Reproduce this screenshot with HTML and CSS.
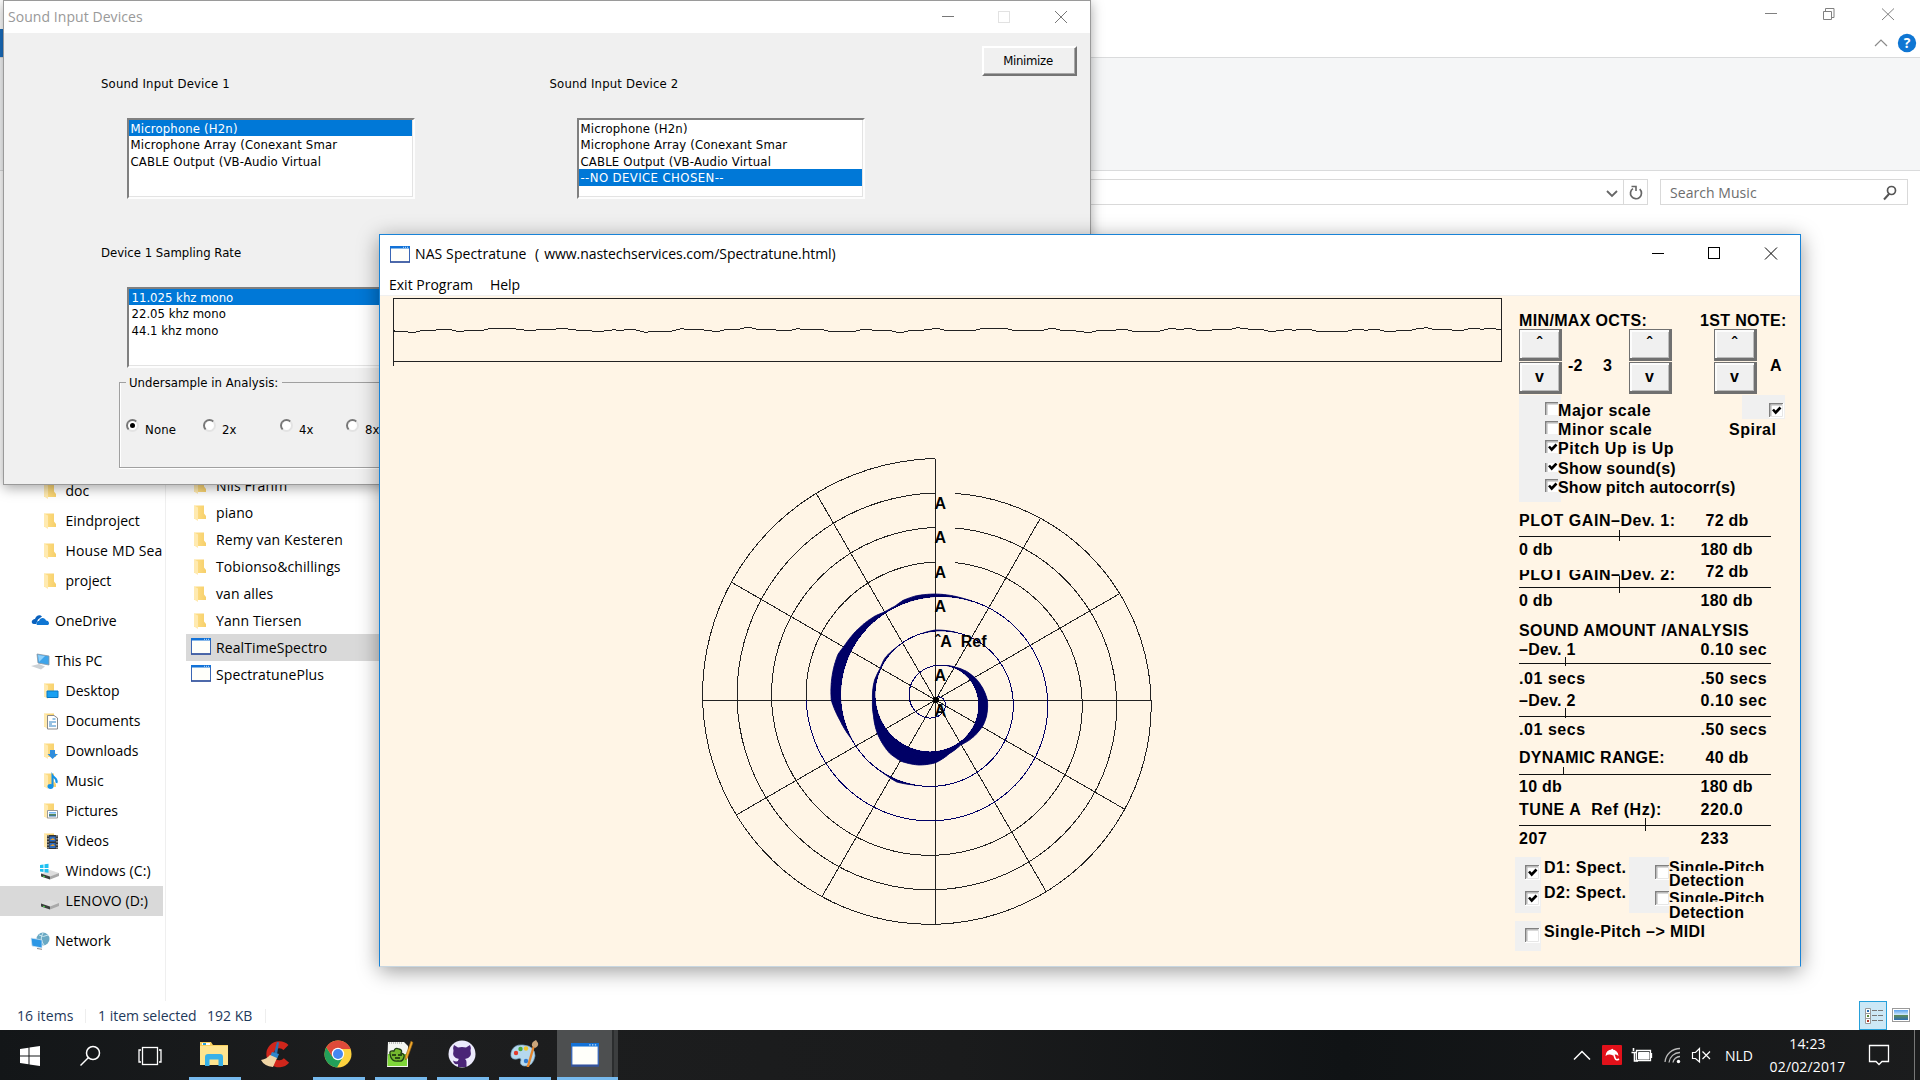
FILE: index.html
```html
<!DOCTYPE html>
<html lang="en">
<head>
<meta charset="utf-8">
<title>NAS Spectratune</title>
<link rel="stylesheet" href="styles.css">
</head>
<body>
<svg width="0" height="0" class="defs">
  <defs>
    <linearGradient id="gFold" x1="0" x2="1"><stop offset="0" stop-color="#ffe08a"/><stop offset="1" stop-color="#f6cf6a"/></linearGradient>
    <linearGradient id="gSky" x1="0" y1="0" x2="0" y2="1"><stop offset="0" stop-color="#5aa3ee"/><stop offset=".5" stop-color="#d5ecfb"/><stop offset=".55" stop-color="#5c8a5a"/><stop offset="1" stop-color="#2b6db5"/></linearGradient>
    <symbol id="folder" viewBox="0 0 19 18"><path d="M3 1.500H13V9.500L15 12V15H3Z" fill="url(#gFold)"/><path d="M3 1.500L7 3.500V17L3 14.500Z" fill="#ffeab0"/></symbol>
    <symbol id="win" viewBox="0 0 20 17" preserveAspectRatio="none"><rect x=".5" y=".5" width="19" height="15.500" fill="#fffffa" stroke="#3a66b4"/><rect width="20" height="2.500" fill="#1272d8"/><path d="M13 1.300h1m1 0h1m1 0h1" stroke="#bfe0ff"/><path d="M0 16H20" stroke="#33519b" stroke-width="1.500"/></symbol>
    <symbol id="drive" viewBox="0 0 19 18"><path d="M1 11.500L10 8l9 3-9 4z" fill="#dedede"/><path d="M1 11.500L10 14.500V17.500L1 14.500Z" fill="#3b3f3d"/><path d="M10 14.500l9-3.500v3L10 17.500z" fill="#a9a9a9"/><path d="M3 14.300l2 .6" stroke="#4be04b"/></symbol>
    <symbol id="check" viewBox="0 0 15 15"><path d="M0 0H15V15H0Z" fill="#fff"/><path d="M.75 14V.75H14" fill="none" stroke="#808080" stroke-width="1.500"/><path d="M2 13V2H13" fill="none" stroke="#b4b4b4"/><path d="M13.500 1V13.500H1" fill="none" stroke="#e6e6e6"/></symbol>
    <symbol id="checked" viewBox="0 0 15 15"><use href="#check"/><path d="M4 6.500L6.700 9.500L11.500 4.500" fill="none" stroke="#000" stroke-width="2.600"/></symbol>
  </defs>
</svg>

<main class="desktop">
  <section class="explorer">
    <div class="ex-title">
      <i class="tab-tint"></i>
      <svg class="ex-caption" width="140" height="28" fill="none" stroke="#808080"><path d="M5 13.500H17"/><path d="M63.500 11.500h8v8h-8zM65.500 11V8.500h8.500v9H72"/><path d="M122 8.500L134 20M134 8.500L122 20"/></svg>
    </div>
    <div class="ex-tabs">
      <i class="file-tab"></i>
      <svg width="46" height="24" fill="none"><path d="M1 17L7 11L13 17" stroke="#8a8a8a" stroke-width="1.200"/><circle cx="33" cy="14" r="9.200" fill="#0f76d3"/><text x="33" y="19" class="help-q">?</text></svg>
    </div>
    <div class="ribbon"></div>
    <div class="ex-address">
      <div class="path-box"><svg width="44" height="24" fill="none" stroke="#666"><path d="M4 11L9 16L14 11" stroke-width="1.800"/><path d="M20.500 0V24" stroke="#d9d9d9"/><path d="M36.700 9.200A5.500 5.500 0 1 1 30 8.600" stroke-width="1.700"/><path d="M28.500 6.500H33V11" stroke-width="1.600"/></svg></div>
      <div class="search-box"><span>Search Music</span><svg width="16" height="16" fill="none" stroke="#555"><circle cx="9.500" cy="5.500" r="4" stroke-width="1.700"/><path d="M7 9L2 14.500" stroke-width="2"/></svg></div>
    </div>
    <div class="ex-main">
      <nav class="tree">
        <div class="t2"><svg><use href="#folder"/></svg>doc</div>
        <div class="t2"><svg><use href="#folder"/></svg>Eindproject</div>
        <div class="t2"><svg><use href="#folder"/></svg><span class="loose">House MD Sea</span></div>
        <div class="t2"><svg><use href="#folder"/></svg>project</div>
        <div class="t1 gap"><svg><path d="M1 11C0 8 3 7 4 7C5 3 9 2 11 4.500L7 7.500L5 12H3Q1.500 12 1 11Z" fill="#0a61bd"/><path d="M6 13C4.500 11 6 9 8 9C9 5 14 5 15 8.500C18 8.500 19 12 17 13Z" fill="#0f76d3"/></svg>OneDrive</div>
        <div class="t1 gap"><svg><path d="M6 2L18 4V13L7 11Z" fill="#3ea4ea" stroke="#8b97a2" stroke-width=".8"/><path d="M7 3L14 4L8 10Z" fill="#8fd0fa"/><path d="M0 14L8 12L14 14.500L10 17.500Z" fill="#cdd2d6"/></svg>This PC</div>
        <div class="t2"><svg><use href="#folder"/><path d="M6 9H17V15.500H6Z" fill="#19a0f2" stroke="#0b78c4"/></svg>Desktop</div>
        <div class="t2"><svg><use href="#folder"/><path d="M6.500 3.500H13L16.500 6V17H6.500Z" fill="#fff" stroke="#8a8a8a"/><path d="M8 10h7M8 12h3M8 14h7M11.500 7h3" stroke="#2e83c6"/></svg>Documents</div>
        <div class="t2"><svg><use href="#folder"/><path d="M9 8H14V12H17L11.500 17L6.500 12H9Z" fill="#2f8ddd"/></svg>Downloads</div>
        <div class="t2"><svg><use href="#folder"/><path d="M11.500 14V3.500C13 6 17 7 15.500 11" fill="none" stroke="#1693e8" stroke-width="2"/><ellipse cx="9.500" cy="14.500" rx="3" ry="2.400" fill="#1693e8"/></svg>Music</div>
        <div class="t2"><svg><use href="#folder"/><path d="M6.500 8.500H16.500V16H6.500Z" fill="#fff" stroke="#999"/><path d="M8 10H15V14.500H8Z" fill="url(#gSky)"/></svg>Pictures</div>
        <div class="t2"><svg><use href="#folder"/><path d="M6 3H17V17H6Z" fill="#333"/><path d="M8.500 4.500h6v5h-6zM8.500 11h6v5h-6z" fill="#2d6cc0"/><path d="M9 8l3-2 2 2zM9 14l3-2 2 2z" fill="#e59a2d"/><path d="M7 3V17M16 3V17" stroke="#ddd" stroke-dasharray="1.500"/></svg>Videos</div>
        <div class="t2 drv"><svg><use href="#drive"/><path d="M0 3L3.500 2.500V6H0ZM4.500 2.300L8.500 1.700V6H4.500ZM0 7H3.500V10L0 9.500ZM4.500 7H8.500V10.700L4.500 10.200Z" fill="#1fc1f1"/></svg>Windows (C:)</div>
        <div class="t2 drv sel"><svg><use href="#drive"/></svg>LENOVO (D:)</div>
        <div class="t1 gap"><svg><circle cx="12" cy="7" r="6.500" fill="#6aa9c4"/><path d="M8 3Q12 6 17 3M12 1Q8 7 13 13" stroke="#c9e6ee" fill="none"/><path d="M0 6L11 8V16L1 14Z" fill="#2d97e5" stroke="#dbe8f2" stroke-width=".7"/><path d="M6 16.500l5 .8" stroke="#888"/></svg>Network</div>
      </nav>
      <div class="files">
        <div><svg><use href="#folder"/></svg>Nils Frahm</div>
        <div><svg><use href="#folder"/></svg>piano</div>
        <div><svg><use href="#folder"/></svg>Remy van Kesteren</div>
        <div><svg><use href="#folder"/></svg>Tobionso&amp;chillings</div>
        <div><svg><use href="#folder"/></svg>van alles</div>
        <div><svg><use href="#folder"/></svg>Yann Tiersen</div>
        <div class="exe sel"><svg><use href="#win"/></svg>RealTimeSpectro</div>
        <div class="exe"><svg><use href="#win"/></svg>SpectratunePlus</div>
      </div>
    </div>
    <footer class="ex-status">
      <span class="s1">16 items</span><span class="s2">1 item selected</span><span class="s3">192 KB</span>
      <svg class="views" width="61" height="29"><rect x=".5" y=".5" width="27" height="28" fill="#cce8f6" stroke="#26a0da"/><path d="M6.500 7.500h5v15h-5zM6.500 12.500h5M6.500 17.500h5" fill="#fff" stroke="#999"/><path d="M8 10h2" stroke="#2a6cb0" stroke-width="2"/><path d="M8 15h2" stroke="#5a8a3a" stroke-width="2"/><path d="M8 20h2" stroke="#b03a2a" stroke-width="2"/><path d="M13 9.500h5m1 0h5M13 14.500h5m1 0h5M13 19.500h5m1 0h5" stroke="#777"/><rect x="33.500" y="7.500" width="17" height="13" fill="#fff" stroke="#999"/><rect x="35" y="9" width="14" height="10" fill="url(#gSky)"/></svg>
    </footer>
  </section>

  <section class="dialog">
    <header><span>Sound Input Devices</span>
      <svg width="152" height="31" fill="none"><path d="M4 14.500H16" stroke="#777"/><rect x="60.500" y="9.500" width="11" height="11" stroke="#e2e2e2"/><path d="M117 9L129 21M129 9L117 21" stroke="#777"/></svg>
    </header>
    <div class="dlg-body">
      <div class="btn-row"><button>Minimize</button></div>
      <div class="devices">
        <div class="device">
          <label>Sound Input Device 1</label>
          <ul class="list"><li class="on">Microphone (H2n)</li><li>Microphone Array (Conexant Smar</li><li>CABLE Output (VB-Audio Virtual</li></ul>
        </div>
        <div class="device second">
          <label>Sound Input Device 2</label>
          <ul class="list"><li>Microphone (H2n)</li><li>Microphone Array (Conexant Smar</li><li>CABLE Output (VB-Audio Virtual</li><li class="on caps-row">--NO DEVICE CHOSEN--</li></ul>
        </div>
      </div>
      <div class="device rate">
        <label>Device 1 Sampling Rate</label>
        <ul class="list"><li class="on">11.025 khz mono</li><li>22.05 khz mono</li><li>44.1 khz mono</li></ul>
      </div>
      <fieldset>
        <legend>Undersample in Analysis:</legend>
        <label class="r1"><i class="radio on"></i>None</label><label class="r2"><i class="radio"></i>2x</label><label class="r3"><i class="radio"></i>4x</label><label><i class="radio"></i>8x</label>
      </fieldset>
    </div>
  </section>

  <section class="tuner">
    <header>
      <svg class="app" width="20" height="17"><use href="#win"/></svg><span class="name">NAS Spectratune</span><span class="url">( www.nastechservices.com/Spectratune.html)</span>
      <svg class="caps" width="150" height="38" fill="none" stroke="#000"><path d="M2 18.500H14"/><rect x="58.500" y="12.500" width="11" height="11"/><path d="M115 12.500L127 24.500M127 12.500L115 24.500"/></svg>
    </header>
    <div class="menu"><span>Exit Program</span><span>Help</span></div>
    <div class="client">
      <svg class="plot" width="1135" height="669" viewBox="380 296 1135 669">
        <g fill="none" stroke="#222" shape-rendering="crispEdges">
          <path d="M393.500 366V298.500H1501.500V361.500H393.500"/>
          <path id="wave"/>
          <path id="spokes"/>
          <path id="outer"/>
          <path id="inner" stroke="#000066"/>
        </g>
        <path id="band" fill="#000066" stroke="#000066" stroke-width=".8"/>
        <circle cx="936" cy="700" r="3"/>
        <g class="oct"><text x="934.500" y="509">A</text><text x="934.500" y="543">A</text><text x="934.500" y="578">A</text><text x="934.500" y="612">A</text><text x="935" y="647">ˆA&#160; Ref</text><text x="934.500" y="681">A</text><text x="934.500" y="716">A</text></g>
      </svg>
      <aside class="panel">
        <div class="heads"><span>MIN/MAX OCTS:</span><span>1ST NOTE:</span></div>
        <div class="spinners">
          <div class="spin"><b class="up">ˆ</b><b>v</b></div><span class="v1">-2</span><span class="v2">3</span>
          <div class="spin"><b class="up">ˆ</b><b>v</b></div>
          <div class="spin last"><b class="up">ˆ</b><b>v</b></div><span>A</span>
        </div>
        <div class="options">
          <div class="checks">
            <div class="row"><i><svg><use href="#check"/></svg></i><span>Major scale</span></div>
            <div class="row"><i><svg><use href="#check"/></svg></i><span>Minor scale</span></div>
            <div class="row"><i><svg><use href="#checked"/></svg></i><span>Pitch Up is Up</span></div>
            <div class="row cut"><i><svg><use href="#checked"/></svg></i>Show sound(s)</div>
            <div class="row tight"><i><svg><use href="#checked"/></svg></i>Show pitch autocorr(s)</div>
          </div>
          <div class="spiral"><div class="sbox"><svg><use href="#checked"/></svg></div><span>Spiral</span></div>
        </div>
        <div class="slider"><div class="hd"><span class="wide">PLOT GAIN–Dev. 1:</span><span class="in">72 db</span></div><svg class="track"><path d="M0 5.500H252M100.500 -1V10"/></svg><div class="ft"><span>0 db</span><span>180 db</span></div></div>
        <div class="slider g3"><div class="hd"><span class="half wide">PLOT GAIN–Dev. 2:</span><span class="in">72 db</span></div><svg class="track"><path d="M0 5.500H252M100.500 -6V11"/></svg><div class="ft"><span>0 db</span><span>180 db</span></div></div>
        <div class="title">SOUND AMOUNT /ANALYSIS</div>
        <div class="slider"><div class="hd"><span>–Dev. 1</span><span class="wide">0.10 sec</span></div><svg class="track"><path d="M0 3.500H252M46.500 -3V6"/></svg><div class="ft wide"><span>.01 secs</span><span>.50 secs</span></div></div>
        <div class="slider g3"><div class="hd"><span>–Dev. 2</span><span class="wide">0.10 sec</span></div><svg class="track"><path d="M0 5.500H252M46.500 -3V7"/></svg><div class="ft wide"><span>.01 secs</span><span>.50 secs</span></div></div>
        <div class="slider g9"><div class="hd"><span>DYNAMIC RANGE:</span><span class="in">40 db</span></div><svg class="track"><path d="M0 6.500H252M44.500 -1V7"/></svg><div class="ft"><span>10 db</span><span>180 db</span></div></div>
        <div class="slider g4"><div class="hd"><span class="wide">TUNE A&#160; Ref (Hz):</span><span class="wide">220.0</span></div><svg class="track"><path d="M0 5.500H252M126.500 -2V11"/></svg><div class="ft wide"><span>207</span><span>233</span></div></div>
        <div class="detect">
          <div class="gray"><svg><use href="#checked"/></svg><svg><use href="#checked"/></svg></div>
          <div class="names"><span>D1: Spect.</span><span>D2: Spect.</span></div>
          <div class="gray g2"><svg><use href="#check"/></svg><svg><use href="#check"/></svg></div>
          <div class="pitch"><span class="sp">Single-Pitch</span><span>Detection</span><span class="sp">Single-Pitch</span><span>Detection</span></div>
        </div>
        <div class="midi"><div class="gray"><svg><use href="#check"/></svg></div><span>Single-Pitch –&gt; MIDI</span></div>
      </aside>
    </div>
  </section>

  <footer class="taskbar">
    <div class="slot start"><svg width="20" height="20"><path d="M0 3L8.500 1.800V9.600H0ZM9.500 1.600L20 0V9.600H9.500ZM0 10.500H8.500V18.300L0 17ZM9.500 10.500H20V20L9.500 18.500Z" fill="#fff"/></svg></div>
    <div class="slot start"><svg width="22" height="22" fill="none" stroke="#fff" stroke-width="1.500"><circle cx="14" cy="8" r="6.500"/><path d="M9.500 12.500L1.500 20.500"/></svg></div>
    <div class="slot start"><svg width="24" height="20" fill="none" stroke="#fff" stroke-width="1.300"><rect x="4.500" y="1.500" width="15" height="17"/><path d="M3 4H1V16H3M21 4H23V16H21"/></svg></div>
    <div class="slot run"><svg width="28" height="26"><path d="M0 1H11L13 4H28V23H0Z" fill="#f7cf5e"/><path d="M0 5H28V24H0Z" fill="#ffe58f"/><path d="M2 2h8v2H2z" fill="#fff"/><path d="M3 2h3v2H3z" fill="#28a3dc"/><path d="M5 25V16Q5 13 8 13H20Q23 13 23 16V25H18.500V18.500H9.500V25Z" fill="#38b1e8"/></svg></div>
    <div class="slot"><svg width="30" height="28" viewBox="1 0 30 28"><path d="M26 7.500A9.500 9.500 0 1 0 26.500 20.500" fill="none" stroke="#d0261b" stroke-width="7"/><path d="M17 2l2 .5-2 12-3-1z" fill="#2d6fae"/><path d="M12 12l7 2-2 5-7-2.500z" fill="#2f86c9"/><path d="M10 15l7 3L13 27Q4 26 1 20Q7 19 10 15Z" fill="#f0d5a5"/></svg></div>
    <div class="slot run"><svg width="28" height="28"><circle cx="14" cy="14" r="13.500" fill="#fdd23e"/><path d="M2.300 7.200A13.500 13.500 0 0 0 13 27.500L19 17L14 14L8 16Z" fill="#22a05a"/><path d="M2.300 7.200L8.600 17L14 9H26.500A14 14 0 0 0 25.800 7.300A13.500 13.500 0 0 0 2.300 7.200Z" fill="#de4a3a"/><circle cx="14" cy="14" r="6.200" fill="#fff"/><circle cx="14" cy="14" r="5" fill="#4587f1"/></svg></div>
    <div class="slot run"><svg width="28" height="28"><path d="M2 2H18L22 6V27H1Z" fill="#f4f6f2"/><path d="M3 3h14" stroke="#888" stroke-dasharray="1"/><path d="M2 14H21V26H1.500Z" fill="#7fd63a"/><path d="M4 14Q3 10 8 11Q9 7 13 9Q17 10 15 13Q19 14 18 17Q17 22 12 21Q5 22 4 14Z" fill="#74b72f" stroke="#1f3d14" stroke-width="1.300"/><path d="M6 15h4m2 0h4M9 18h5" stroke="#12260b" stroke-width="1.500"/><path d="M25 1l2 1.500L21.500 18l-2 2-.3-3z" fill="#f0a72a" stroke="#8a5a14" stroke-width=".6"/></svg></div>
    <div class="slot run"><svg width="28" height="28"><circle cx="14" cy="14" r="13.500" fill="#eceafc"/><path d="M6 5L10 7.500Q14 6.500 18 7.500L22 5Q23.500 8 22.500 10.500Q24.500 18 17 19Q18.500 20 18.500 22V27H10V24Q6 25 5 20.500Q8 22 10 21Q10 19.500 11 19Q3.500 18 5.500 10.500Q4.500 8 6 5Z" fill="#4a2577"/></svg></div>
    <div class="slot run"><svg width="30" height="28"><path d="M2 13Q4 4 14 5Q26 6 26 16Q24 27 15 26Q10 25 12 20Q12 17 8 19Q1 20 2 13Z" fill="#b5d8ee" stroke="#7aa6c4" stroke-width=".7"/><circle cx="7" cy="13" r="2.200" fill="#e23b2c"/><circle cx="11.500" cy="9" r="2.200" fill="#4aa83a"/><circle cx="17" cy="8.500" r="2.200" fill="#f0c52b"/><circle cx="17" cy="21" r="2.200" fill="#2f7bd0"/><path d="M24 5L26 6L20 27L17.500 27Z" fill="#e5852b"/><path d="M23 6Q22 2 27 0L29 3Q30 6 26 8Z" fill="#caa57a"/></svg></div>
    <div class="slot run active"><svg width="28" height="24"><use href="#win"/></svg></div>
    <div class="tray">
      <svg width="280" height="50" fill="none" stroke="#fff"><path d="M2 29.500L10 21.500L18 29.500" stroke-width="1.500"/><rect x="30" y="15" width="20" height="20" rx="1" fill="#e2111a" stroke="none"/><path d="M33.500 26Q34 19.500 40 19.500Q46 20 46.500 26Q43 23.500 41 25.500Q37 23.500 33.500 26" fill="#fff" stroke="none"/><path d="M40 19L43 28Q44 31 47 29" stroke-width="1.600"/><path d="M64.500 20.500H78.500V30.500H64.500ZM79.500 23V28" stroke-width="1.300"/><path d="M66.500 22.500H77V29H66.500Z" fill="#fff"/><path d="M61.500 18V21M59.500 22.500H65M62.500 23V31H66" stroke-width="1.600"/><path d="M93 32A15 15 0 0 1 108 18.500M97 32.500A11 11 0 0 1 108 22.500M101 32.500A7 7 0 0 1 108 26.500" stroke="#bbb" stroke-width="1.300"/><circle cx="106.500" cy="31.500" r="1.700" fill="#fff" stroke="none"/><path d="M120.500 22.500H123.500L127.500 18.500V32L123.500 28.500H120.500Z" stroke-width="1.200"/><path d="M130.500 21.500L138 29M138 21.500L130.500 29" stroke-width="1.200"/></svg>
    </div>
    <span class="lang">NLD</span>
    <div class="clock"><span>14:23</span><span>02/02/2017</span></div>
    <svg class="note" width="22" height="24" fill="none" stroke="#fff" stroke-width="1.300"><path d="M1.500 2.500H20.500V18.500H14L11 21.500L8 18.500H1.500Z"/></svg>
    <i class="peek"></i>
  </footer>
</main>
<script src="plot.js"></script>
</body>
</html>
```
FILE: plot.js
```js
// Note spiral: the radius grows by one ring per octave, clockwise from 12 o'clock.
const CX = 935.5, CY = 700, RING = 34.5;
const point = (turn, extra = 0) => {
  const a = turn * 2 * Math.PI, r = turn * RING + extra;
  return (CX + r * Math.sin(a)).toFixed(2) + ' ' + (CY - r * Math.cos(a)).toFixed(2);
};
const arc = (from, to) => {
  let d = 'M' + point(from);
  for (let t = from + 0.01; t < to; t += 0.01) d += 'L' + point(t);
  return d + 'L' + point(to);
};
const set = (id, d) => document.getElementById(id).setAttribute('d', d);

// Octave labels interrupt the rings just right of the vertical axis.
const gap = n => n + Math.asin(19.5 / (n * RING)) / (2 * Math.PI);
set('outer', arc(3.75, 4) + arc(gap(4), 5) + arc(gap(5), 6) + arc(gap(6), 7));
set('inner', arc(0, 3.75));

let spokes = '';
for (let i = 1; i <= 12; i++) {
  const turn = i === 12 ? 7 : 6 + i / 12;
  spokes += 'M' + CX + ' ' + CY + 'L' + point(turn);
}
set('spokes', spokes);

// Spectrum amplitude along the spiral: [octave position, height].
const levels = [
  [1.05, 0], [1.09, 1], [1.17, 5], [1.25, 8.7], [1.3, 8.7], [1.33, 8], [1.38, 5], [1.42, 2.5],
  [1.46, 5], [1.5, 11], [1.54, 14], [1.58, 15.6], [1.613, 14.6], [1.667, 9.5], [1.71, 5],
  [1.75, 2.6], [1.8, 2], [1.83, .5], [1.86, 1.5], [1.9, 0], [1.97, 0], [2, 1], [2.04, 0],
  [2.54, 0], [2.57, 2], [2.6, 0], [2.68, 0], [2.717, 4], [2.75, 9.4], [2.795, 10.2],
  [2.82, 10.4], [2.835, 8.3], [2.863, 6.5], [2.9, 3.5], [2.917, 1], [2.935, 1], [2.95, 3],
  [2.97, 3.5], [3, 2.5], [3.03, 1], [3.05, 0]
];
const level = t => {
  for (let i = 1; i < levels.length; i++) {
    const [t0, a0] = levels[i - 1], [t1, a1] = levels[i];
    if (t <= t1) return a0 + (a1 - a0) * Math.max(0, t - t0) / (t1 - t0);
  }
  return 0;
};
let band = '';
for (let t = 1.04; t < 3.06; t += 0.005) {
  const u = t + 0.005, a = level(t), b = level(u);
  if (a > 0 || b > 0) band += 'M' + point(t) + 'L' + point(t, a) + 'L' + point(u, b) + 'L' + point(u) + 'Z';
}
set('band', band);

// Input waveform, quantised to whole pixels.
let wave = 'M394 330';
for (let x = 394; x < 1502; x += 4) {
  const y = 329.6 - 1.1 * Math.sin((x - 424) / 9.8) - 0.8 * Math.sin(x / 37) - 0.5 * Math.sin(x / 3.7);
  wave += 'L' + x + ' ' + (Math.round(y) + 0.5);
}
set('wave', wave + 'L1502 330');
```
FILE: styles.css
```css
* { box-sizing: border-box; }
body { margin: 0; font: 14px/20px "Open Sans", "Noto Sans", sans-serif; color: #000; overflow: hidden; }
svg { display: block; flex: none; overflow: visible; }
.defs { position: absolute; }
.desktop { position: relative; width: 1920px; height: 1080px; display: flex; flex-direction: column; background: #fff; overflow: hidden; }

/* Explorer */
.explorer { height: 1030px; display: flex; flex-direction: column; background: #fff; }
.ex-title { height: 29px; display: flex; justify-content: space-between; padding-left: 272px; }
.tab-tint { width: 116px; height: 1px; background: #a58ab8; }
.ex-caption { margin-right: 20px; }
.ex-tabs { height: 29px; display: flex; justify-content: space-between; border-bottom: 1px solid #dadbdc; }
.file-tab { width: 4px; height: 28px; background: #1a6fc0; }
.ex-tabs svg { height: 28px; }
.help-q { font: bold 14px "Open Sans", sans-serif; fill: #fff; text-anchor: middle; }
.ribbon { height: 113px; background: #f5f6f7; border-bottom: 1px solid #dadbdc; }
.ex-address { height: 46px; padding: 8px 12px 0 100px; display: flex; gap: 12px; }
.path-box { flex: 1; height: 26px; border: 1px solid #d9d9d9; display: flex; justify-content: flex-end; }
.search-box { width: 248px; height: 26px; border: 1px solid #d9d9d9; display: flex; align-items: center; justify-content: space-between; padding: 1px 9px 0; color: #6d6d6d; letter-spacing: .05px; }
.ex-main { height: 784px; display: flex; }
.tree { width: 166px; padding-top: 259px; border-right: 1px solid #efefef; overflow: hidden; white-space: nowrap; }
.tree div { height: 30px; width: 163px; display: flex; align-items: center; overflow: hidden; padding-bottom: 1px; }
.tree svg { width: 19px; height: 18px; }
.t2 { padding-left: 41px; gap: 5.500px; }
.t2.drv { padding-left: 40px; gap: 6.500px; letter-spacing: .1px; }
.loose { letter-spacing: .15px; }
.t1 { padding-left: 31px; gap: 5px; }
.tree .t1.gap { margin-top: 10px; }
.sel { background: #d9d9d9; }
.files { padding: 255px 0 0 20px; flex: 1; letter-spacing: .1px; }
.files div { height: 27px; width: 300px; display: flex; align-items: center; padding-left: 6px; gap: 5px; }
.files svg { width: 19px; height: 18px; margin-left: -1px; margin-right: 1px; }
.files .exe { padding-left: 5px; }
.files .exe svg { width: 20px; height: 17px; margin: -3px 0 0; }
.ex-status { flex: 1; display: flex; align-items: center; color: #1e395b; padding-left: 17px; }
.ex-status span { height: 14px; line-height: 13px; border-right: 1px solid #eee; }
.ex-status .s1 { width: 69px; letter-spacing: .1px; }
.ex-status .s2 { margin-left: 12px; border: 0; width: 109px; }
.ex-status .s3 { width: 59px; }
.views { margin-left: auto; }

/* Sound input dialog */
.dialog { position: absolute; left: 3px; top: 0; width: 1088px; height: 485px; border: 1px solid #9a9a9a; background: #f0f0f0; box-shadow: 0 3px 12px rgba(0,0,0,.35); display: flex; flex-direction: column; }
.dialog header { height: 32px; background: #fff; display: flex; justify-content: space-between; align-items: center; color: #999; padding-left: 4px; letter-spacing: .06px; }
.dlg-body { flex: 1; font: 13px/16px "DejaVu Sans Condensed", "DejaVu Sans", sans-serif; letter-spacing: .16px; display: flex; flex-direction: column; }
.btn-row { height: 42px; padding: 13px 13px 0 0; display: flex; justify-content: flex-end; }
button { width: 95px; height: 30px; padding: 0 3px 0 0; font: inherit; letter-spacing: -.3px; background: #f0f0f0; border: 2px solid; border-color: #fff #747474 #747474 #fff; box-shadow: inset -1px -1px #a8a8a8; }
.devices { display: flex; padding-left: 97px; }
.device { display: flex; flex-direction: column; width: 448.500px; }
.device label { height: 43px; padding-top: .500px; }
.list { margin: 0 0 0 25.500px; padding: 0; width: 288px; height: 81px; list-style: none; background: #fff; border: 2px solid; border-color: #808080 #fdfdfd #fdfdfd #808080; box-shadow: inset -1px -1px #e3e3e3; }
.second .list { margin-left: 27px; }
.list li { padding: 1px 0 0 2px; height: 16.400px; margin-right: 1px; }
.list .on { background: #0078d7; color: #fff; }
.list .caps-row { letter-spacing: .4px; }
.rate { padding: 45px 0 0 97px; width: 600px; }
.rate label { letter-spacing: 0; }
.rate .list { width: 448px; }
.rate .list li { padding-left: 3px; letter-spacing: 0; }
fieldset { margin: 6px 0 0 115px; width: 500px; height: 94px; padding: 28px 0 0 6px; border: 1px solid #a0a0a0; box-shadow: inset 1px 0 #fff, 0 1px #fff; display: flex; }
legend { padding: 1px 4px 0 3px; height: 17px; letter-spacing: .05px; }
fieldset label { display: flex; align-items: flex-start; gap: 6px; width: 77px; height: 16px; line-height: 21px; }
.r3 + label { margin-left: -11px; }
.radio { width: 13px; height: 13px; border-radius: 50%; background: #fff; border: 2px solid; border-color: #777 #e3e3e3 #e3e3e3 #777; display: flex; }
.radio.on::after { content: ""; width: 5px; height: 5px; margin: 2px; border-radius: 50%; background: #000; }

/* Spectratune */
.tuner { position: absolute; left: 379px; top: 234px; width: 1422px; height: 733px; border: 1px solid #1883d7; border-bottom-color: #c8d6e0; background: #fff; box-shadow: 0 4px 20px rgba(0,0,0,.4); display: flex; flex-direction: column; }
.tuner header { height: 38px; display: flex; align-items: center; padding-left: 10px; }
.app { margin-right: 5px; }
.tuner .name { width: 120px; letter-spacing: .1px; }
.tuner .url { word-spacing: 1.500px; letter-spacing: -.05px; }
.caps { margin-left: auto; }
.menu { height: 23px; display: flex; gap: 17px; padding: 2px 0 0 9px; border-bottom: 1px solid #f0f0f0; }
.client { flex: 1; display: flex; min-height: 0; background: #fff5e6; }
.oct { font: bold 16px "Liberation Sans", Arial, sans-serif; }
.panel { width: 285px; padding: 16px 0 0 4px; font: bold 16px/18px "Liberation Sans", Arial, sans-serif; letter-spacing: .25px; white-space: nowrap; }
.heads { height: 17px; display: flex; gap: 52px; letter-spacing: .35px; }
.heads span:first-child { width: 129px; }
.spinners { height: 65px; display: flex; align-items: center; }
.spin { width: 43px; height: 65px; display: flex; flex-direction: column; gap: 1px; }
.spin b { height: 32px; background: #f0f0f0; border: 1px solid #707070; border-width: 1px 3px 3px 1px; text-align: center; line-height: 28px; box-shadow: inset 2px 2px #fcfcfc, inset -1px -1px #bbb; }
.v1 { width: 41px; padding: 9px 0 0 6px; }
.v2 { width: 26px; padding-top: 9px; }
.spin.last { margin-left: 42px; }
.spin.last + span { padding: 9px 0 0 13px; }
.options { height: 117px; display: flex; justify-content: space-between; padding: 1px 15px 0 0; }
.checks { height: 107px; width: 223px; margin-right: -60px; padding-top: 7px; background: linear-gradient(#f0f0f0, #f0f0f0) 0 0 / 42px 107px no-repeat; }
.row { height: 19.200px; line-height: 18px; display: flex; }
.row span { letter-spacing: .55px; }
.row.tight { letter-spacing: .15px; }
.row i { width: 39px; height: 13px; padding-left: 26px; overflow: hidden; }
.row.cut i { height: 9px; margin-top: 3px; }
.row.cut svg { margin-top: -4px; }
.row svg, .sbox svg, .gray svg { width: 15px; height: 15px; }
.spiral { width: 43px; }
.sbox { width: 43px; height: 24px; background: #f0f0f0; padding: 8px 0 0 27px; }
.spiral span { display: block; margin: 2px 0 0 -13px; letter-spacing: .5px; }
.slider { height: 48px; }
.g3 { margin-top: 3px; }
.g4 { margin-top: 4px; }
.g9 { margin-top: 9px; }
.hd, .ft { display: grid; grid-template-columns: 181.500px 1fr; height: 20px; line-height: 20px; }
.ft { height: 18px; line-height: 18px; }
.hd .in { padding-left: 5px; }
.wide { letter-spacing: .55px; }
.half { height: 20px; padding-top: 3px; overflow: hidden; clip-path: inset(8px 0 1px 0); }
.track { width: 252px; height: 10px; fill: none; stroke: #111; shape-rendering: crispEdges; }
.title { height: 18px; margin: 12px 0 0; letter-spacing: .45px; }
.detect { display: flex; margin: 9px 0 0 -4px; height: 56px; }
.gray { width: 26px; height: 56px; background: #f0f0f0; padding: 8px 0 0 10px; display: flex; flex-direction: column; gap: 10.500px; overflow: hidden; }
.names { width: 88px; padding: 2px 0 0 3px; display: flex; flex-direction: column; gap: 7px; letter-spacing: .4px; }
.gray.g2 { width: 40px; padding-left: 26px; }
.pitch { display: flex; flex-direction: column; }
.pitch span { height: 18px; margin-top: -2px; }
.pitch .sp { clip-path: inset(0 0 6px 0); }
.pitch .sp:first-child { margin-top: 2px; margin-bottom: -3px; }
.pitch .sp:nth-child(3) { margin-top: 0; margin-bottom: -2px; }
.midi { display: flex; margin: 8px 0 0 -4px; }
.midi .gray { height: 30px; padding-top: 7px; }
.midi span { padding: 2px 0 0 3px; letter-spacing: .4px; }

/* Taskbar */
.taskbar { height: 50px; background: linear-gradient(90deg, #131618, #1d1e1f 20%, #1a1b1c 50%, #101315 70%, #1b1c1d); display: flex; color: #fff; }
.slot { width: 52px; margin: 0 5px; display: flex; justify-content: center; align-items: center; border-bottom: 3px solid transparent; }
.slot svg { margin: 1px 2px 0 0; }
.slot.start { width: 60px; margin: 0; padding-top: 3px; }
.slot.start svg { margin: 2px 0 0; }
.slot.start:nth-child(3) { margin-right: 4px; }
.slot.run { border-color: #76b9ed; }
.slot.active { width: 61px; margin: 0 1px; background: linear-gradient(90deg, #4d4f50 55px, #2b2d2e 55px 57px, #3c3e3f 57px); }
.slot.active svg { margin: 2px 5px 0 0; }
.tray { margin-left: auto; width: 153px; }
.lang { width: 43px; line-height: 51px; margin-right: 2px; }
.clock { width: 75px; display: flex; flex-direction: column; align-items: center; padding-top: 2px; line-height: 23px; letter-spacing: .15px; }
.note { margin: 13px 24px 0 23px; }
.peek { width: 1px; background: #777; margin-right: 5px; }
```
